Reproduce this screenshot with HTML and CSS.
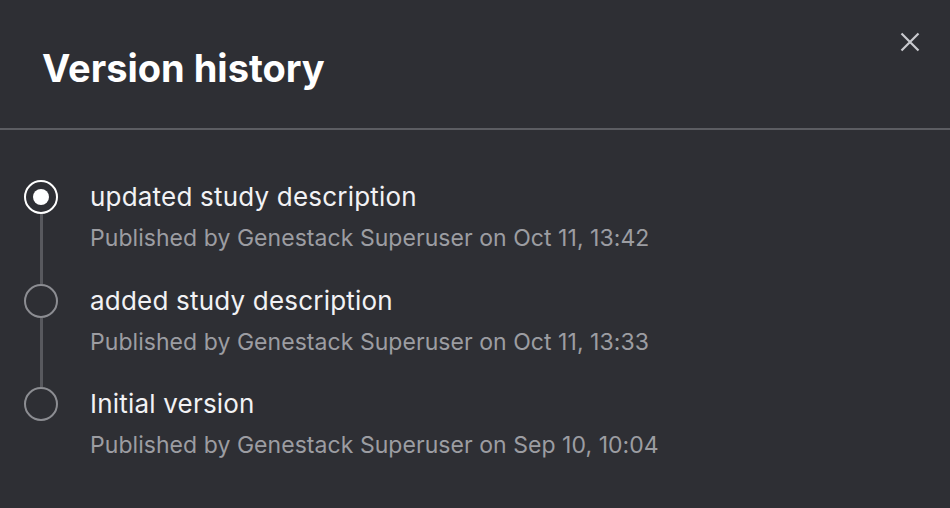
FILE: index.html
```html
<!DOCTYPE html>
<html>
<head>
<meta charset="utf-8">
<link rel="stylesheet" href="styles.css">
</head>
<body>
<div class="dialog">
  <header class="header">
    <h1 class="title">Version history</h1>
    <button class="close" aria-label="Close">
      <svg width="20" height="20" viewBox="0 0 20 20"><path d="M1.5 1.5 L18.5 18.5 M18.5 1.5 L1.5 18.5" stroke="#c9cacf" stroke-width="2.2" fill="none"/></svg>
    </button>
  </header>
  <ul class="timeline">
    <li class="item current">
      <span class="marker"></span>
      <div class="text">
        <div class="name">updated study description</div>
        <div class="meta">Published by Genestack Superuser on Oct 11, 13:42</div>
      </div>
    </li>
    <li class="item">
      <span class="marker"></span>
      <div class="text">
        <div class="name">added study description</div>
        <div class="meta">Published by Genestack Superuser on Oct 11, 13:33</div>
      </div>
    </li>
    <li class="item last">
      <span class="marker"></span>
      <div class="text">
        <div class="name">Initial version</div>
        <div class="meta">Published by Genestack Superuser on Sep 10, 10:04</div>
      </div>
    </li>
  </ul>
</div>
</body>
</html>
```
FILE: styles.css
```css
html, body {
  margin: 0;
  padding: 0;
  background: #2e2f34;
  height: 100%;
}
body {
  font-family: Inter, "Noto Sans", sans-serif;
  color: #f2f2f4;
}
.dialog {
  width: 950px;
  height: 508px;
  overflow: hidden;
}
.header {
  height: 130px;
  border-bottom: 2px solid #5c5d62;
  box-sizing: border-box;
  display: flex;
  align-items: flex-start;
  justify-content: space-between;
  padding: 0 0 0 42px;
}
.title {
  margin: 44px 0 0 0;
  font-size: 38px;
  font-weight: 700;
  line-height: 48px;
  color: #ffffff;
}
.close {
  background: none;
  border: 0;
  padding: 0;
  margin: 32px 30px 0 0;
  width: 20px;
  height: 20px;
  cursor: pointer;
}
.close svg { display: block; }
.timeline {
  list-style: none;
  margin: 0;
  padding: 50px 0 0 24px;
}
.item {
  position: relative;
  display: flex;
  gap: 32px;
  height: 103.5px;
}
.marker {
  position: relative;
  width: 34px;
  height: 34px;
  box-sizing: border-box;
  border: 2px solid #8c8d92;
  border-radius: 50%;
  flex: none;
}
.item::before {
  content: "";
  position: absolute;
  left: 16px;
  top: 34px;
  width: 3px;
  height: 69.5px;
  background: #58595e;
}
.item.last::before { display: none; }
.current .marker {
  border-color: #ffffff;
}
.current .marker::after {
  content: "";
  position: absolute;
  left: 7px;
  top: 7px;
  width: 16px;
  height: 16px;
  border-radius: 50%;
  background: #ffffff;
}
.text {
  margin-top: 0;
}
.name {
  font-size: 26px;
  line-height: 34px;
  letter-spacing: 0.2px;
  color: #f2f2f4;
  white-space: nowrap;
}
.meta {
  margin-top: 10px;
  font-size: 23px;
  line-height: 28px;
  letter-spacing: 0.05px;
  color: #9c9da2;
  white-space: nowrap;
}
```
